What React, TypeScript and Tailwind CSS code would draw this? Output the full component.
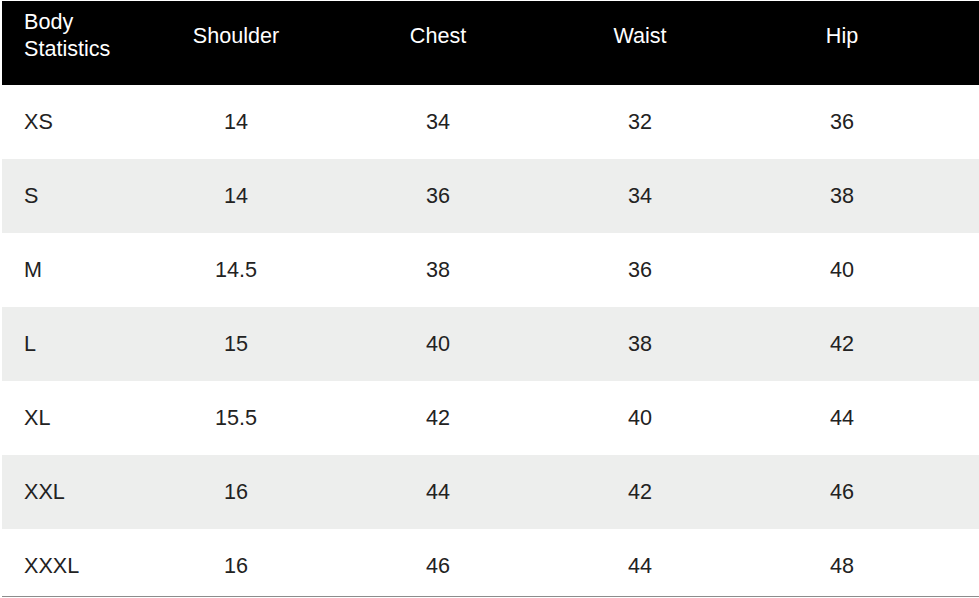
import React from 'react';

const headers = ['Shoulder', 'Chest', 'Waist', 'Hip'];

const rows = [
  { size: 'XS', values: ['14', '34', '32', '36'] },
  { size: 'S', values: ['14', '36', '34', '38'] },
  { size: 'M', values: ['14.5', '38', '36', '40'] },
  { size: 'L', values: ['15', '40', '38', '42'] },
  { size: 'XL', values: ['15.5', '42', '40', '44'] },
  { size: 'XXL', values: ['16', '44', '42', '46'] },
  { size: 'XXXL', values: ['16', '46', '44', '48'] },
];

const cols = "grid grid-cols-[133px_202px_202px_202px_202px_1fr]";

const App = () => {
  return (
    <div
      className="min-h-screen bg-white pt-[1px] pl-[2px] text-[21.6px] leading-[26px] text-[#222]"
      style={{ fontFamily: '"Liberation Sans", Arial, sans-serif' }}
    >
      {/* Header */}
      <div className={`${cols} items-center bg-black text-white pt-[7px] pb-[23px] leading-[27px]`}>
        <div className="pl-[22px]">
          Body
          <br />
          Statistics
        </div>
        {headers.map((h) => (
          <div key={h} className="text-center">
            {h}
          </div>
        ))}
        <div />
      </div>

      {/* Rows */}
      {rows.map((row, i) => (
        <div
          key={row.size}
          className={`${cols} ${i % 2 === 1 ? 'bg-[#edeeed]' : 'bg-white'} ${
            i === rows.length - 1
              ? 'h-[68px] items-start pt-[24px] border-b border-[#8c8c8c]'
              : 'h-[74px] items-center'
          }`}
        >
          <div className="pl-[22px]">{row.size}</div>
          {row.values.map((v, j) => (
            <div key={j} className="text-center">
              {v}
            </div>
          ))}
          <div />
        </div>
      ))}
    </div>
  );
};

export default App;
